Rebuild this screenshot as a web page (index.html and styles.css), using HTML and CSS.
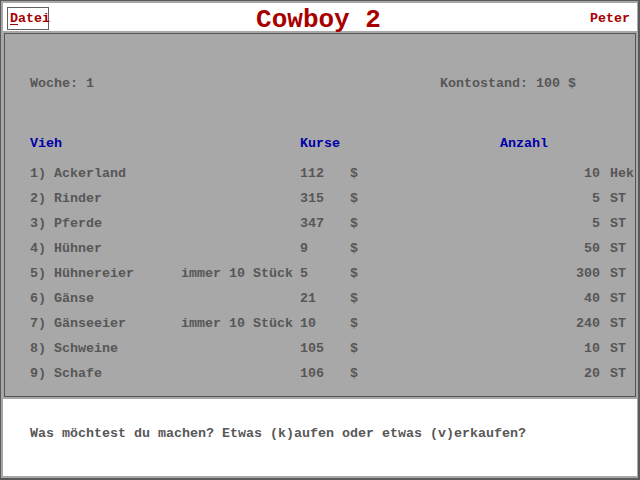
FILE: index.html
```html
<!DOCTYPE html>
<html lang="de">
<head>
<meta charset="utf-8">
<title>Cowboy 2</title>
<link rel="stylesheet" href="styles.css">
</head>
<body>
<div class="window">
  <header class="topbar">
    <div class="menu"><span class="menu-btn"><u>D</u>atei</span></div>
    <h1 class="title">Cowboy 2</h1>
    <div class="user">Peter</div>
  </header>
  <main class="panel">
    <div class="status">
      <span>Woche: 1</span>
      <span class="konto">Kontostand: 100 $</span>
    </div>
    <div class="table">
      <div class="row head">
        <span class="c-name">Vieh</span><span class="c-note"></span><span class="c-price">Kurse</span><span class="c-dollar"></span><span class="c-count-head">Anzahl</span>
      </div>
      <div class="row"><span class="c-name">1) Ackerland</span><span class="c-note"></span><span class="c-price">112</span><span class="c-dollar">$</span><span class="c-count">10</span><span class="c-unit">Hek</span></div>
      <div class="row"><span class="c-name">2) Rinder</span><span class="c-note"></span><span class="c-price">315</span><span class="c-dollar">$</span><span class="c-count">5</span><span class="c-unit">ST</span></div>
      <div class="row"><span class="c-name">3) Pferde</span><span class="c-note"></span><span class="c-price">347</span><span class="c-dollar">$</span><span class="c-count">5</span><span class="c-unit">ST</span></div>
      <div class="row"><span class="c-name">4) Hühner</span><span class="c-note"></span><span class="c-price">9</span><span class="c-dollar">$</span><span class="c-count">50</span><span class="c-unit">ST</span></div>
      <div class="row"><span class="c-name">5) Hühnereier</span><span class="c-note">immer 10 Stück</span><span class="c-price">5</span><span class="c-dollar">$</span><span class="c-count">300</span><span class="c-unit">ST</span></div>
      <div class="row"><span class="c-name">6) Gänse</span><span class="c-note"></span><span class="c-price">21</span><span class="c-dollar">$</span><span class="c-count">40</span><span class="c-unit">ST</span></div>
      <div class="row"><span class="c-name">7) Gänseeier</span><span class="c-note">immer 10 Stück</span><span class="c-price">10</span><span class="c-dollar">$</span><span class="c-count">240</span><span class="c-unit">ST</span></div>
      <div class="row"><span class="c-name">8) Schweine</span><span class="c-note"></span><span class="c-price">105</span><span class="c-dollar">$</span><span class="c-count">10</span><span class="c-unit">ST</span></div>
      <div class="row"><span class="c-name">9) Schafe</span><span class="c-note"></span><span class="c-price">106</span><span class="c-dollar">$</span><span class="c-count">20</span><span class="c-unit">ST</span></div>
    </div>
  </main>
  <footer class="prompt">
    <p>Was möchtest du machen? Etwas (k)aufen oder etwas (v)erkaufen?</p>
  </footer>
</div>
</body>
</html>
```

FILE: styles.css
```css
* { box-sizing: border-box; }
html, body { margin: 0; padding: 0; }
body {
  width: 640px;
  height: 480px;
  overflow: hidden;
  font-family: "Liberation Mono", "DejaVu Sans Mono", monospace;
  font-size: 13.33px;
  font-weight: bold;
  color: #575757;
}
.window {
  width: 640px;
  height: 480px;
  background: #a8a8a8;
  border-style: solid;
  border-color: #5a5a5a;
  border-width: 1px 2px 2px 1px;
  padding: 2px 1px 2px 2px;
  display: flex;
  flex-direction: column;
  gap: 2px;
}
.topbar {
  height: 28px;
  flex: none;
  background: #fff;
  display: grid;
  grid-template-columns: 1fr auto 1fr;
  align-items: start;
  padding: 4px 7px 0 4px;
  color: #a80000;
}
.menu-btn {
  display: inline-block;
  width: 42px;
  height: 23px;
  border: 1px solid #606060;
  padding-left: 2px;
  line-height: 21px;
  color: #a80000;
}
.menu-btn u { text-decoration-thickness: 1px; text-underline-offset: 2px; }
.title {
  margin: 0;
  font-size: 26px;
  line-height: 24px;
  font-weight: bold;
  color: #a80000;
  padding-top: 1px;
}
.user {
  justify-self: end;
  line-height: 22px;
  padding-top: 1px;
}
.panel {
  height: 364px;
  flex: none;
  margin: 0 1px;
  border: 1px solid #555;
  background: #a8a8a8;
  padding: 37px 0 0 25px;
}
.status {
  display: flex;
  height: 25px;
  line-height: 25px;
}
.status .konto { margin-left: 346px; }
.table { margin-top: 35px; }
.row {
  display: grid;
  grid-template-columns: 151px 119px 50px 200px 50px 10px 30px;
  height: 25px;
  line-height: 25px;
  white-space: pre;
}
.row.head { color: #0000a8; margin-bottom: 5px; }
.row .c-count { text-align: right; }
.row .c-unit { grid-column: 7; }
.row .c-count-head { grid-column: 5 / span 3; margin-left: -50px; }
.prompt {
  flex: 1;
  background: #fff;
  padding: 22px 0 0 27px;
}
.prompt p {
  margin: 0;
  line-height: 25px;
}
```
